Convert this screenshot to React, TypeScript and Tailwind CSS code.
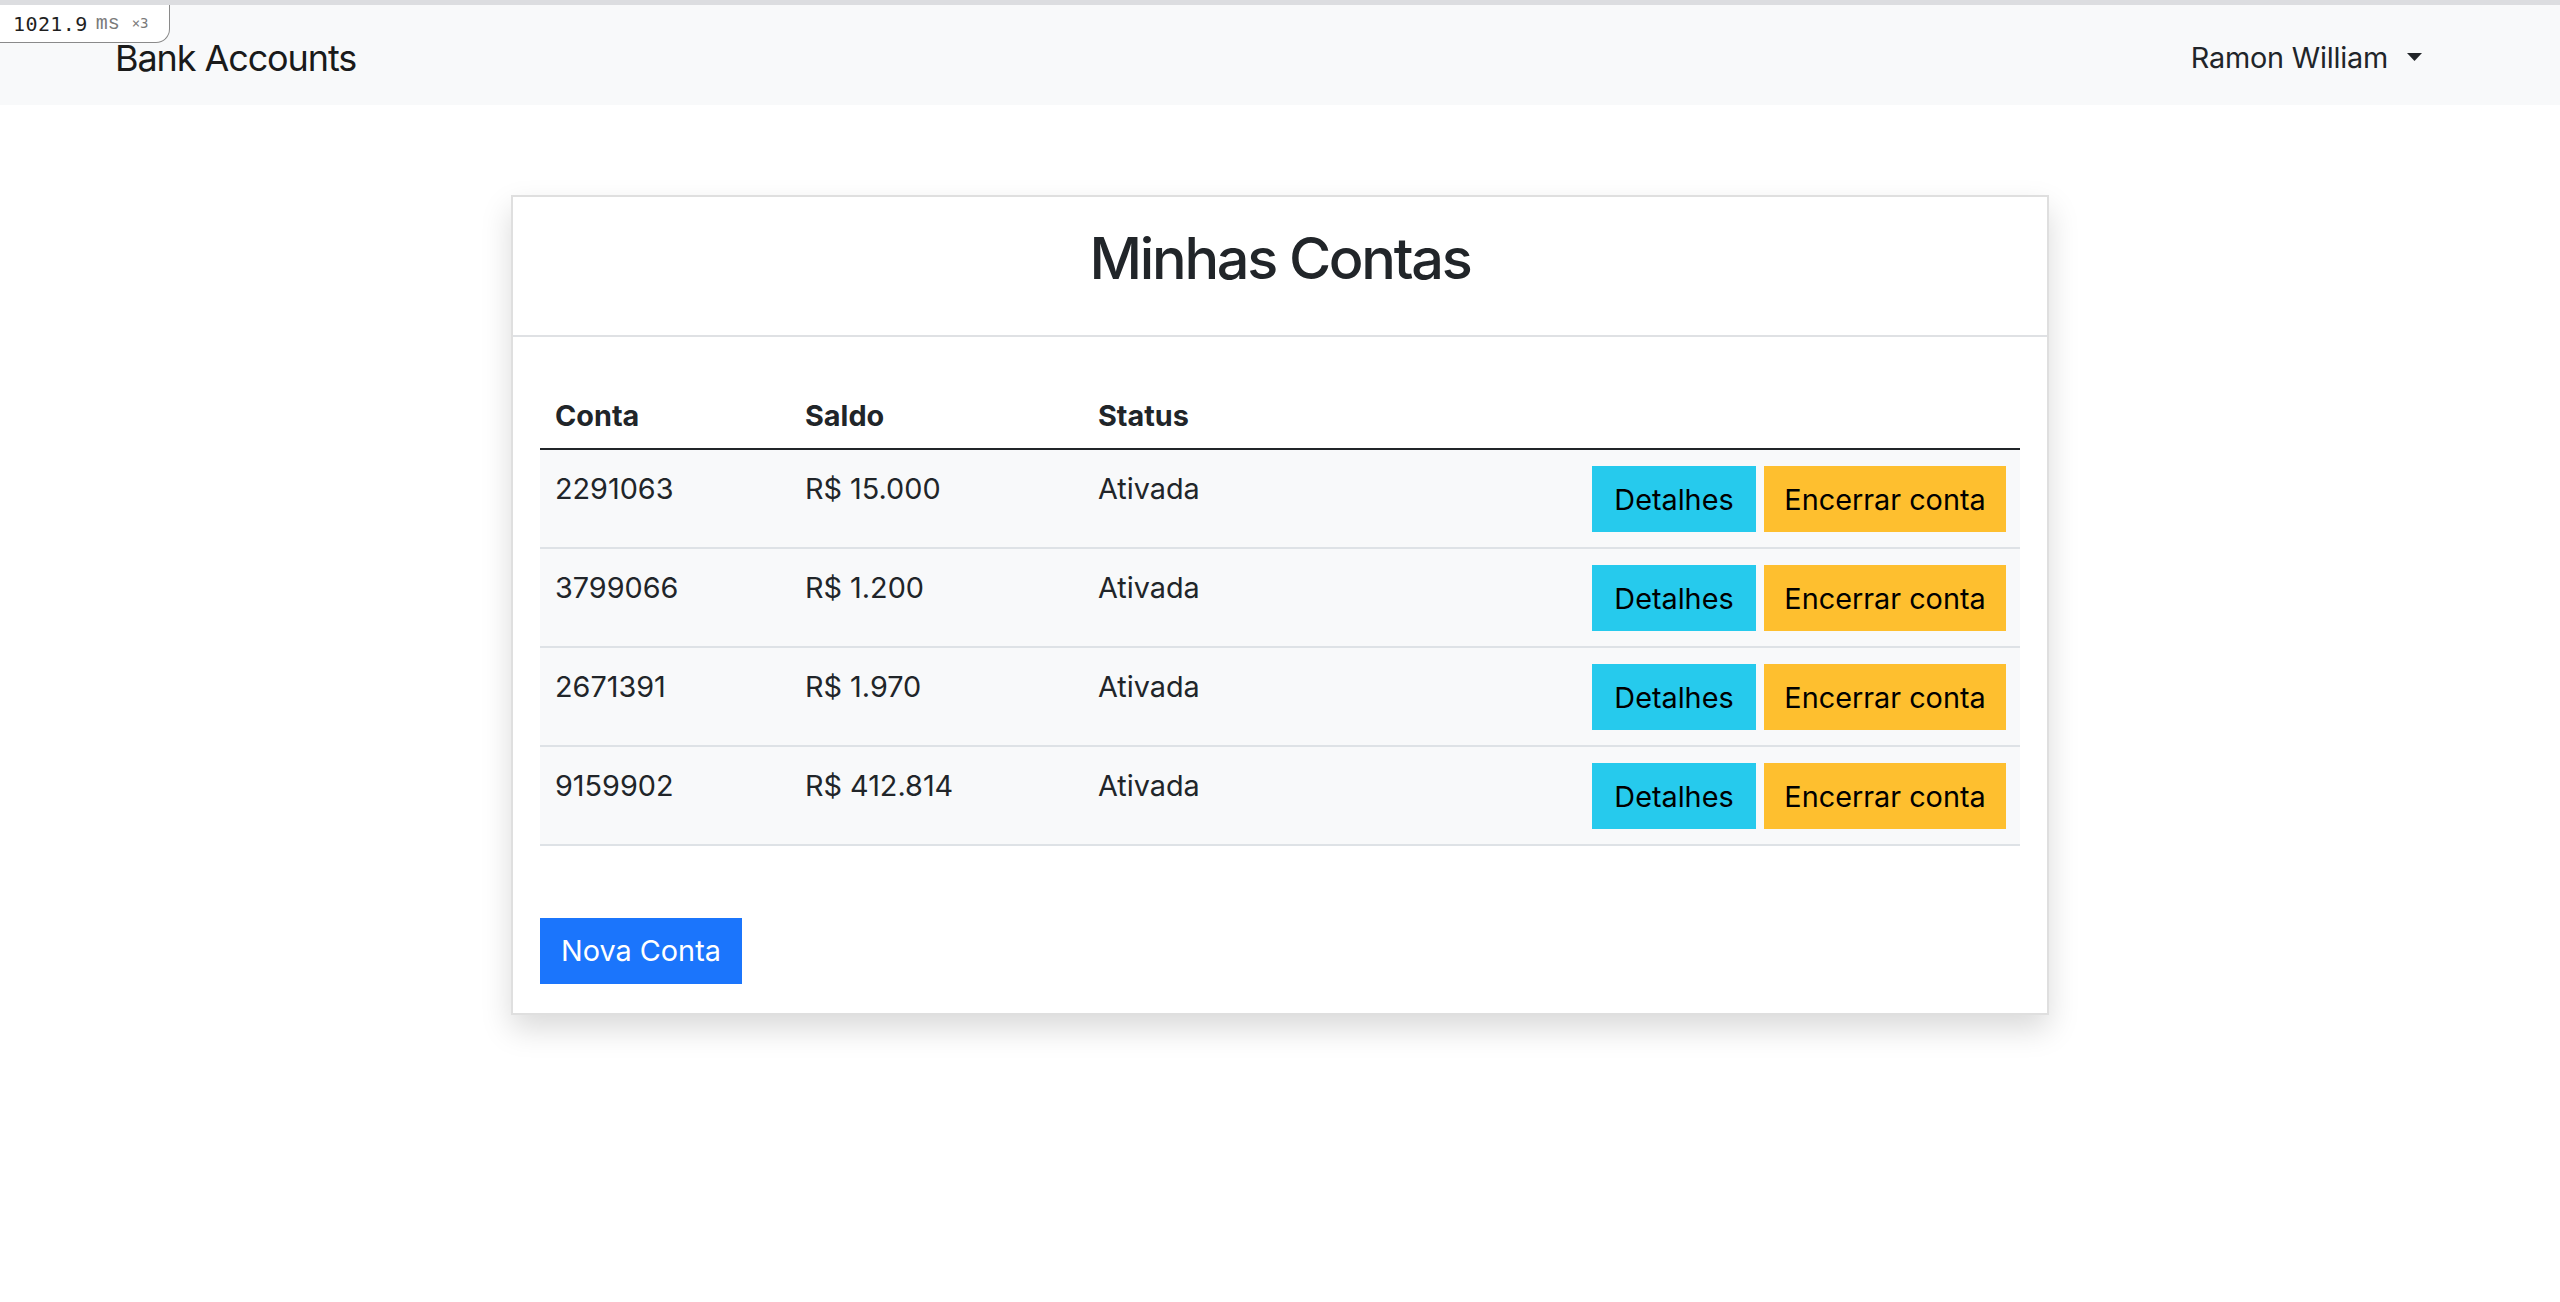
const accounts = [
  { conta: "2291063", saldo: "R$ 15.000", status: "Ativada" },
  { conta: "3799066", saldo: "R$ 1.200", status: "Ativada" },
  { conta: "2671391", saldo: "R$ 1.970", status: "Ativada" },
  { conta: "9159902", saldo: "R$ 412.814", status: "Ativada" },
];

function TimingBadge() {
  return (
    <div className="absolute left-0 top-[5px] z-10 flex h-[38px] w-[170px] items-center gap-[8px] rounded-br-[14px] border-b border-r border-[#8a8a8a] bg-white pl-[13px]">
      <span className="font-['DejaVu_Sans_Mono',monospace] text-[20px] tracking-[0.4px] text-[#1f1f1f]">
        1021.9
      </span>
      <span className="font-['Liberation_Mono',monospace] text-[20px] text-[#7a7a7a]">
        ms
      </span>
      <span className="ml-[4px] font-['DejaVu_Sans_Mono',monospace] text-[14px] text-[#7a7a7a]">
        ×3
      </span>
    </div>
  );
}

function Navbar() {
  return (
    <div>
      <div className="h-[5px] bg-[#dcdde0]" />
      <nav className="flex h-[100px] items-start justify-between bg-[#f8f9fa] pl-[115px] pr-[138px]">
        <span className="mt-[26px] text-[36px] leading-[54px] tracking-[-1.1px] text-[#1a1a1a]">
          Bank Accounts
        </span>
        <div className="mt-[31px] flex items-start gap-[19px]">
          <span className="text-[28.8px] leading-[43px] tracking-[-0.2px] text-[#212529]">
            Ramon William
          </span>
          <svg width="15" height="8" viewBox="0 0 15 8" className="mt-[17px]">
            <polygon points="0,0 15,0 7.5,8" fill="#212529" />
          </svg>
        </div>
      </nav>
    </div>
  );
}

export default function App() {
  return (
    <div className="relative min-h-screen bg-white font-['Inter','Noto_Sans',sans-serif] text-[#212529]">
      <TimingBadge />
      <Navbar />

      <main className="mx-auto mt-[90px] w-[1538px] border-2 border-[#dfdfdf] bg-white shadow-[0_14px_29px_rgba(0,0,0,0.15)]">
        {/* Card header */}
        <div className="border-b-2 border-[#dfe1e4] pb-[42px] pt-[27px] text-center">
          <h2 className="text-[57.6px] font-medium leading-[69px] tracking-[-2.3px]">Minhas Contas</h2>
        </div>

        {/* Card body */}
        <div className="px-[27px] pb-[29px] pt-[42px]">
          <div className="grid h-[71px] grid-cols-[250px_293px_1fr] border-b-2 border-[#212529] text-[28.8px] font-bold leading-[43px]">
            <div className="pl-[15px] pt-[15px]">Conta</div>
            <div className="pl-[15px] pt-[15px]">Saldo</div>
            <div className="pl-[15px] pt-[15px]">Status</div>
          </div>

          {accounts.map((acc) => (
            <div
              key={acc.conta}
              className="grid h-[99px] grid-cols-[250px_293px_1fr_auto] border-b-2 border-[#dee2e6] bg-[#f8f9fa] text-[28.8px] leading-[43px]"
            >
              <div className="pl-[15px] pt-[17px]">{acc.conta}</div>
              <div className="pl-[15px] pt-[17px]">{acc.saldo}</div>
              <div className="pl-[15px] pt-[17px]">{acc.status}</div>
              <div className="flex gap-[8px] pr-[14px] pt-[16px]">
                <button className="flex h-[66px] w-[164px] items-center justify-center bg-[#26caed] text-black">
                  Detalhes
                </button>
                <button className="flex h-[66px] w-[242px] items-center justify-center bg-[#febf2f] text-black">
                  Encerrar conta
                </button>
              </div>
            </div>
          ))}

          <button className="mt-[72px] flex h-[66px] w-[202px] items-center justify-center bg-[#1b75fc] text-[28.8px] text-white">
            Nova Conta
          </button>
        </div>
      </main>
    </div>
  );
}
